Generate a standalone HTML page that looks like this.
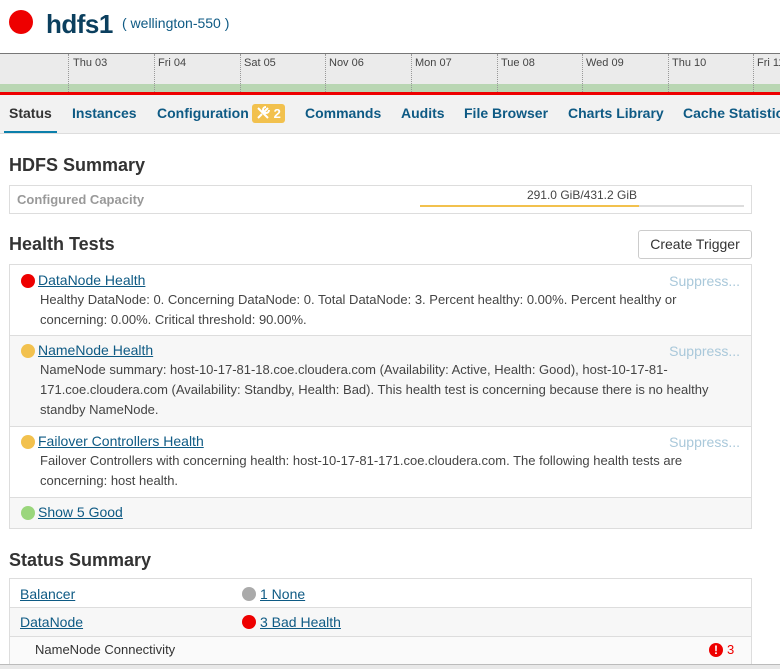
<!DOCTYPE html>
<html><head><meta charset="utf-8"><style>
*{margin:0;padding:0;box-sizing:border-box}
body{width:780px;height:669px;overflow:hidden;background:#fff;font-family:"Liberation Sans",Arial,sans-serif;position:relative;color:#333}
.a{position:absolute;white-space:nowrap}
.dot{position:absolute;border-radius:50%;width:14px;height:14px}
a{color:#0e5a84;text-decoration:underline}
.tab{position:absolute;top:105px;font-size:14px;font-weight:bold;color:#0e5a84;white-space:nowrap}
.vl{position:absolute;top:54px;height:38px;border-left:1px dotted #999}
.dl{position:absolute;top:57px;font-size:11px;color:#444;white-space:nowrap}
h2{position:absolute;left:9px;font-size:18px;font-weight:bold;color:#333}
.row{position:absolute;left:9px;width:743px;border:1px solid #ddd;border-top:none}
.sup{position:absolute;right:11px;top:8px;font-size:14px;color:#a9c8da}
.txt{position:absolute;left:30px;font-size:13px;line-height:20px;color:#444;width:685px}
.ttl{position:absolute;left:28px;top:7px;font-size:14px;white-space:nowrap}
</style></head><body>
<div class="dot" style="left:9px;top:10px;width:24px;height:24px;background:#e00"></div>
<div class="a" style="left:46px;top:9px;font-size:26px;font-weight:bold;color:#0b3f5e;letter-spacing:-0.5px">hdfs1</div>
<div class="a" style="left:122px;top:15px;font-size:14px;color:#0e5a84">( wellington-550 )</div>

<div class="a" style="left:0;top:53px;width:780px;height:39px;background:#ebebeb;border-top:1px solid #777"></div>
<div class="a" style="left:0;top:84px;width:780px;height:8px;background:#b9d6b3"></div>
<div class="vl" style="left:68px"></div><div class="vl" style="left:154px"></div><div class="vl" style="left:240px"></div><div class="vl" style="left:325px"></div><div class="vl" style="left:411px"></div><div class="vl" style="left:497px"></div><div class="vl" style="left:582px"></div><div class="vl" style="left:668px"></div><div class="vl" style="left:753px"></div>
<div class="dl" style="left:73px">Thu 03</div><div class="dl" style="left:158px">Fri 04</div><div class="dl" style="left:244px">Sat 05</div><div class="dl" style="left:329px">Nov 06</div><div class="dl" style="left:415px">Mon 07</div><div class="dl" style="left:501px">Tue 08</div><div class="dl" style="left:586px">Wed 09</div><div class="dl" style="left:672px">Thu 10</div><div class="dl" style="left:757px">Fri 11</div>
<div class="a" style="left:0;top:92px;width:780px;height:3px;background:#e00"></div>

<div class="a" style="left:0;top:95px;width:780px;height:39px;background:#f2f2f2;border-bottom:1px solid #ddd"></div>
<div class="a" style="left:4px;top:131px;width:53px;height:2px;background:#0b7fab"></div>
<div class="tab" style="left:9px;color:#333">Status</div>
<div class="tab" style="left:72px">Instances</div>
<div class="tab" style="left:157px">Configuration</div>
<div class="a" style="left:252px;top:104px;width:33px;height:19px;background:#f2c14e;border-radius:3px;color:#fff;font-weight:bold;font-size:13px;line-height:19px;padding-left:4px">
<svg width="14" height="14" viewBox="0 0 14 14" style="vertical-align:-2px"><path d="M2 2l10 10M12 2L8 6M2 12l4-4M10 1a3 3 0 1 0 3 3" stroke="#fff" stroke-width="2" fill="none"/></svg> 2</div>
<div class="tab" style="left:305px">Commands</div>
<div class="tab" style="left:401px">Audits</div>
<div class="tab" style="left:464px">File Browser</div>
<div class="tab" style="left:568px">Charts Library</div>
<div class="tab" style="left:683px">Cache Statistics</div>

<h2 style="top:155px">HDFS Summary</h2>
<div class="a" style="left:9px;top:185px;width:743px;height:29px;border:1px solid #ddd"></div>
<div class="a" style="left:17px;top:192px;font-size:13px;font-weight:bold;color:#999">Configured Capacity</div>
<div class="a" style="left:420px;top:188px;width:324px;text-align:center;font-size:12px;color:#444">291.0 GiB/431.2 GiB</div>
<div class="a" style="left:420px;top:205px;width:324px;height:2px;background:#ddd"></div>
<div class="a" style="left:420px;top:205px;width:219px;height:2px;background:#f2c14e"></div>

<h2 style="top:234px">Health Tests</h2>
<div class="a" style="left:638px;top:230px;width:114px;height:29px;border:1px solid #ccc;border-radius:3px;font-size:14px;line-height:27px;text-align:center;color:#333">Create Trigger</div>

<div class="row" style="top:264px;height:72px;border-top:1px solid #ddd;background:#fff">
<div class="dot" style="left:11px;top:9px;background:#e00"></div><a class="ttl">DataNode Health</a><div class="sup">Suppress...</div>
<div class="txt" style="top:25px">Healthy DataNode: 0. Concerning DataNode: 0. Total DataNode: 3. Percent healthy: 0.00%. Percent healthy or concerning: 0.00%. Critical threshold: 90.00%.</div></div>
<div class="row" style="top:336px;height:91px;background:#f7f7f7">
<div class="dot" style="left:11px;top:8px;background:#f2c14e"></div><a class="ttl" style="top:6px">NameNode Health</a><div class="sup" style="top:7px">Suppress...</div>
<div class="txt" style="top:24px">NameNode summary: host-10-17-81-18.coe.cloudera.com (Availability: Active, Health: Good), host-10-17-81-171.coe.cloudera.com (Availability: Standby, Health: Bad). This health test is concerning because there is no healthy standby NameNode.</div></div>
<div class="row" style="top:427px;height:71px;background:#fff">
<div class="dot" style="left:11px;top:8px;background:#f2c14e"></div><a class="ttl" style="top:6px">Failover Controllers Health</a><div class="sup" style="top:7px">Suppress...</div>
<div class="txt" style="top:24px">Failover Controllers with concerning health: host-10-17-81-171.coe.cloudera.com. The following health tests are concerning: host health.</div></div>
<div class="row" style="top:498px;height:31px;background:#f7f7f7">
<div class="dot" style="left:11px;top:8px;background:#9ad67c"></div><a class="ttl" style="top:6px">Show 5 Good</a></div>

<h2 style="top:550px">Status Summary</h2>
<div class="row" style="top:578px;height:30px;border-top:1px solid #ddd;background:#fff">
<a class="a" style="left:10px;top:7px;font-size:14px">Balancer</a>
<div class="dot" style="left:232px;top:8px;background:#aaa"></div><a class="a" style="left:250px;top:7px;font-size:14px">1 None</a></div>
<div class="row" style="top:608px;height:29px;background:#f7f7f7">
<a class="a" style="left:10px;top:6px;font-size:14px">DataNode</a>
<div class="dot" style="left:232px;top:7px;background:#e00"></div><a class="a" style="left:250px;top:6px;font-size:14px">3 Bad Health</a></div>
<div class="row" style="top:637px;height:28px;background:#fafafa">
<div class="a" style="left:25px;top:5px;font-size:13px;color:#333">NameNode Connectivity</div>
<div class="dot" style="left:699px;top:6px;background:#e00;color:#fff;font-size:12px;font-weight:bold;text-align:center;line-height:14px">!</div>
<div class="a" style="left:717px;top:5px;font-size:13px;color:#e00">3</div></div>
<div class="a" style="left:0;top:664px;width:780px;height:5px;background:#e8e8e8;border-top:1px solid #bbb"></div>
</body></html>
